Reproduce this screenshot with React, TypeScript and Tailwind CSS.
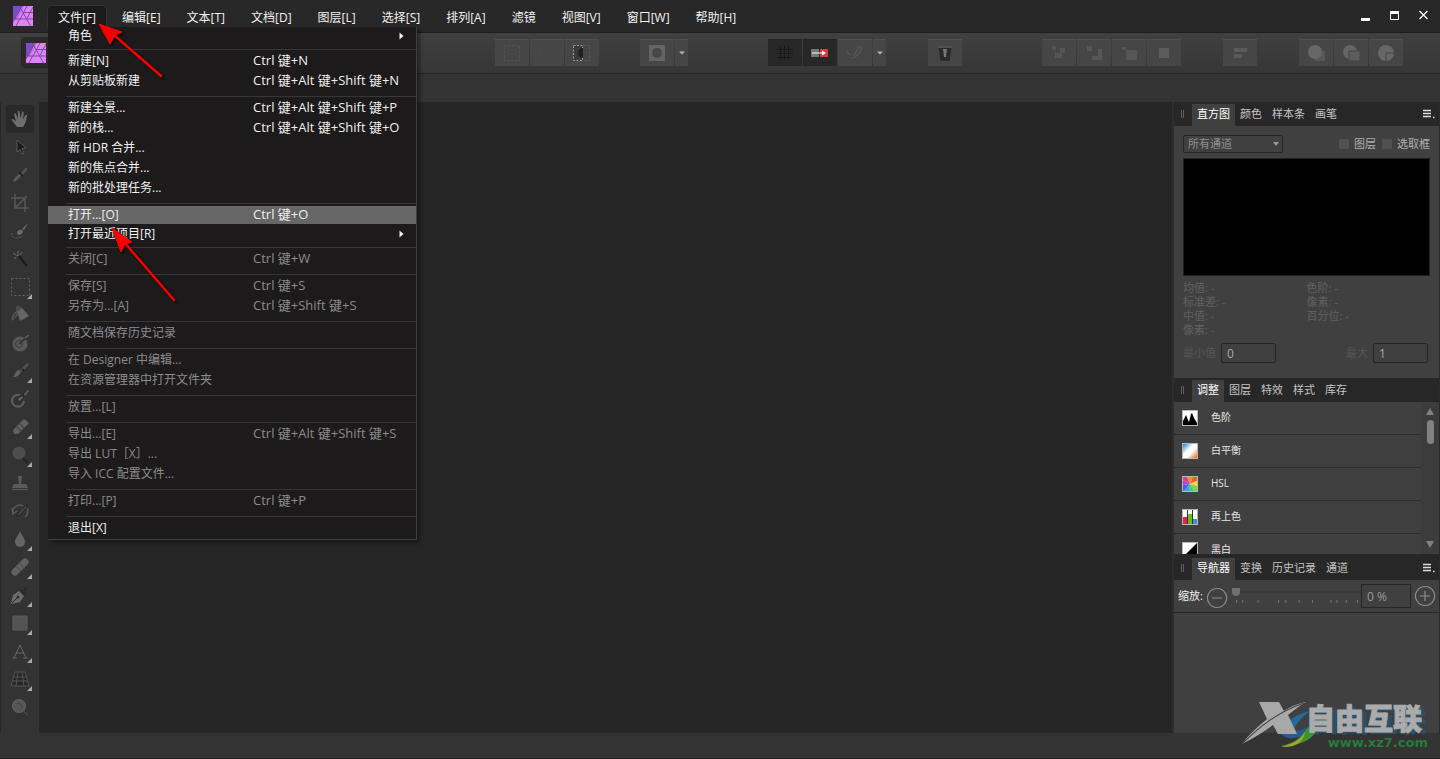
import { ReactNode } from "react";

interface MenuEntry {
  label: string;
  keys?: string;
  disabled?: boolean;
  active?: boolean;
  submenu?: boolean;
}

const menus = ["文件[F]", "编辑[E]", "文本[T]", "文档[D]", "图层[L]", "选择[S]", "排列[A]", "滤镜", "视图[V]", "窗口[W]", "帮助[H]"];

const fileMenu: MenuEntry[][] = [
  [{ label: "角色", submenu: true }],
  [
    { label: "新建[N]", keys: "Ctrl 键+N" },
    { label: "从剪贴板新建", keys: "Ctrl 键+Alt 键+Shift 键+N" },
  ],
  [
    { label: "新建全景...", keys: "Ctrl 键+Alt 键+Shift 键+P" },
    { label: "新的栈...", keys: "Ctrl 键+Alt 键+Shift 键+O" },
    { label: "新 HDR 合并..." },
    { label: "新的焦点合并..." },
    { label: "新的批处理任务..." },
  ],
  [
    { label: "打开...[O]", keys: "Ctrl 键+O", active: true },
    { label: "打开最近项目[R]", submenu: true },
  ],
  [{ label: "关闭[C]", keys: "Ctrl 键+W", disabled: true }],
  [
    { label: "保存[S]", keys: "Ctrl 键+S", disabled: true },
    { label: "另存为...[A]", keys: "Ctrl 键+Shift 键+S", disabled: true },
  ],
  [{ label: "随文档保存历史记录", disabled: true }],
  [
    { label: "在 Designer 中编辑...", disabled: true },
    { label: "在资源管理器中打开文件夹", disabled: true },
  ],
  [{ label: "放置...[L]", disabled: true }],
  [
    { label: "导出...[E]", keys: "Ctrl 键+Alt 键+Shift 键+S", disabled: true },
    { label: "导出 LUT［X］...", disabled: true },
    { label: "导入 ICC 配置文件...", disabled: true },
  ],
  [{ label: "打印...[P]", keys: "Ctrl 键+P", disabled: true }],
  [{ label: "退出[X]" }],
];

const Logo = ({ className = "" }: { className?: string }) => (
  <svg viewBox="0 0 20 20" className={`h-5 w-5 ${className}`} aria-hidden="true">
    <rect width="20" height="20" fill="#e083f8" />
    <path d="M0 0h9L0 16z" fill="#7a4fc4" />
    <path d="M9 0h2L4 13H0v3z" fill="#b46be6" />
    <path d="M9 0L0 16M14 0l-7 13M8 3l9.500 17M0 13h20M20 1l-6 11.500M6.500 13L3 20M10.500 6.500H20" fill="none" stroke="#6a3a8c" strokeWidth="0.800" />
  </svg>
);

const SubmenuArrow = () => (
  <svg viewBox="0 0 5 8" className="absolute right-3 h-2 w-[5px]" aria-hidden="true">
    <path d="M0.500 0.500L4.500 4l-4 3.500z" fill="#f0f0f0" />
  </svg>
);

const FileMenu = () => (
  <div
    role="menu"
    className="absolute top-[27px] left-12 z-20 w-[369px] border-r border-b border-[#3f3f3f] bg-[#1c1a1b] pb-px shadow-[3px_3px_4px_rgba(0,0,0,0.4)]"
  >
    {fileMenu.map((group, i) => (
      <div key={i} className="flex flex-col">
        {i > 0 && <div className="mt-[5px] mb-px ml-[18px] h-px bg-[#383737]" />}
        {group.map((item) => (
          <button
            key={item.label}
            role="menuitem"
            disabled={item.disabled}
            className={`relative flex w-full items-center pl-5 text-left text-xs whitespace-pre ${
              item.submenu ? "h-[17px]" : "my-px h-[18px]"
            } ${item.active ? "bg-[#666]" : ""} ${item.disabled ? "text-[#8c8c8c]" : "text-[#f0f0f0]"}`}
          >
            <span className="w-[185px]">{item.label}</span>
            <span className="text-[13px]">{item.keys}</span>
            {item.submenu && <SubmenuArrow />}
          </button>
        ))}
      </div>
    ))}
  </div>
);

const MenuBar = () => (
  <header className="relative flex h-[33px] items-start border-b border-[#1e1e1e] bg-[#282828]">
    <Logo className="mt-1.5 ml-[13px]" />
    <nav className="mt-[5px] ml-[14px] flex gap-1">
      {menus.map((name, i) => (
        <button
          key={name}
          className={`h-[23px] border px-[10px] pt-[3px] text-xs leading-[18px] text-[#f2f2f2] ${
            i === 0 ? "rounded-t-sm border-[#333] bg-[#1c1a1b]" : "border-transparent"
          }`}
        >
          {name}
        </button>
      ))}
    </nav>
    <div className="mt-[9px] mr-[10px] ml-auto flex gap-[17px]">
      <button aria-label="最小化" className="flex h-3 w-3 items-end">
        <span className="ml-px h-[3px] w-[9px] bg-white" />
      </button>
      <button aria-label="最大化" className="h-3 w-3">
        <svg viewBox="0 0 12 12" className="h-3 w-3">
          <path d="M1.500 2.500h8v8h-8z" fill="none" stroke="#fff" />
          <path d="M1 2h9v3H1z" fill="#fff" />
        </svg>
      </button>
      <button aria-label="关闭" className="h-3 w-3">
        <svg viewBox="0 0 12 12" className="h-3 w-3">
          <path d="M1.500 2l8 8M9.500 2l-8 8" fill="none" stroke="#fff" strokeWidth="1.200" />
        </svg>
      </button>
    </div>
    <FileMenu />
  </header>
);

interface BarButton {
  name: string;
  icon: ReactNode;
  dark?: boolean;
  narrow?: boolean;
}

const caret = <path d="M7 8.500h6l-3 3z" fill="#b4b4b4" />;

const barGroups: { gap: string; buttons: BarButton[] }[] = [
  {
    gap: "ml-auto",
    buttons: [
      { name: "全选", icon: <path d="M2.500 2.500h15v15h-15z" fill="none" stroke="#565656" strokeDasharray="2 2" /> },
      { name: "取消选择", icon: <path d="M2.500 2.500h15v15h-15z" fill="none" stroke="#4b4b4b" strokeDasharray="2 2" /> },
      {
        name: "反选",
        icon: (
          <>
            <path d="M1.500 2.500h9v15h-9z" fill="#3a3a3a" stroke="#a0a0a0" strokeDasharray="2 1.500" />
            <path d="M11 5v10a5 5 0 0 1 0-10z" fill="#1f1f1f" />
            <path d="M11.500 2.500h6v15h-6" fill="none" stroke="#5c5c5c" strokeDasharray="2 2" />
          </>
        ),
      },
    ],
  },
  {
    gap: "ml-[41px]",
    buttons: [
      {
        name: "快速蒙版",
        icon: (
          <>
            <path d="M2 2h16v16H2z" fill="#646464" />
            <circle cx="10" cy="10" r="5" fill="#484848" />
          </>
        ),
      },
      { name: "蒙版选项", icon: caret, narrow: true },
    ],
  },
  {
    gap: "ml-[80px]",
    buttons: [
      { name: "网格", icon: <path d="M2 6.500h16M2 10.500h16M2 14.500h16M5.500 3v14M9.500 3v14M13.500 3v14" stroke="#191919" fill="none" />, dark: true },
      {
        name: "像素对齐",
        icon: (
          <>
            <path d="M1 6h8v8H1z" fill="#777" />
            <path d="M10 6h8v8h-8z" fill="#d83b3f" />
            <path d="M2 10h11" stroke="#fff" />
            <path d="M12 7.500l4 2.500-4 2.500z" fill="#fff" />
          </>
        ),
        dark: true,
      },
      { name: "吸附", icon: <path d="M2 9l3 3m2 3c5 0 10-8 9-11-1-2-3 0-4 3l-3 6" fill="none" stroke="#565656" strokeWidth="1.500" /> },
      { name: "吸附选项", icon: caret, narrow: true },
    ],
  },
  {
    gap: "ml-[42px]",
    buttons: [
      {
        name: "删除",
        icon: (
          <>
            <path d="M3.500 5h13l-2 13h-9z" fill="#2a2a2a" />
            <path d="M8 6h4l-1 8H9z" fill="#777" />
            <path d="M3 4h14" stroke="#525252" strokeWidth="2" />
          </>
        ),
      },
    ],
  },
  {
    gap: "ml-[80px]",
    buttons: [
      { name: "置于底层", icon: <path d="M3 3h4v4H3zM11 5h5v5h-3v5H6v-5h5z" fill="#565656" /> },
      { name: "后移一层", icon: <path d="M3 3h5v5H3zM14 6h4v11H8v-4h6z" fill="#565656" /> },
      { name: "前移一层", icon: <path d="M3 4h4v3H3zM7 7h11v10H7z" fill="#565656" /> },
      { name: "置于顶层", icon: <path d="M5 5h10v10H5z" fill="#5c5c5c" /> },
    ],
  },
  { gap: "ml-[42px]", buttons: [{ name: "对齐", icon: <path d="M4 5h13v4H4zM4 11h8v4H4z" fill="#5a5a5a" /> }] },
  {
    gap: "ml-[42px]",
    buttons: [
      {
        name: "相加",
        icon: (
          <>
            <path d="M15 8h4v10H9v-4z" fill="#585858" />
            <circle cx="9" cy="9" r="7" fill="#676767" />
          </>
        ),
      },
      {
        name: "相减",
        icon: (
          <>
            <circle cx="9" cy="9" r="7" fill="#666" />
            <path d="M8 8h11v10H8z" fill="#5c5c5c" stroke="#444" />
          </>
        ),
      },
      {
        name: "交集",
        icon: (
          <>
            <circle cx="10" cy="10" r="8" fill="#666" />
            <path d="M10 18v-8h8" fill="none" stroke="#444" />
          </>
        ),
      },
    ],
  },
];

const Toolbar = () => (
  <div className="flex h-[41px] items-start border-b border-[#232323] bg-linear-to-b from-[#404040] to-[#363636] pr-[37px] pl-[21px]">
    <button aria-label="照片角色" className="mt-1 flex h-[31px] w-[34px] items-center rounded-sm border border-[#262626] bg-[#2b2b2b] pl-1">
      <Logo />
    </button>
    {barGroups.map((group, i) => (
      <div key={i} className={`mt-1.5 flex gap-px ${group.gap}`}>
        {group.buttons.map((b) => (
          <button
            key={b.name}
            aria-label={b.name}
            className={`flex h-[27px] items-center justify-center border-t ${b.narrow ? "w-[13px]" : "w-[34px]"} ${
              b.dark ? "border-[#232323] bg-[#272727]" : "border-[#505050] bg-[#464646]"
            }`}
          >
            <svg viewBox="0 0 20 20" className="h-5 w-5 shrink-0">
              {b.icon}
            </svg>
          </button>
        ))}
      </div>
    ))}
  </div>
);

const tools: { name: string; more?: boolean; icon: ReactNode }[] = [
  {
    name: "查看工具",
    icon: (
      <path
        d="M7 18C5 15 3 13 1.500 10.500c.6-1 1.600-.6 2.300.1L6 12.500 4 5c.3-1.200 1.500-1 1.900 0L8 10 7.700 2.500c.4-1.200 1.700-1 1.900 0L10.500 9.500 12 3c.5-1 1.700-.7 1.700.4L13 10.500l2.500-4.500c.8-.8 1.800-.2 1.500.9-.8 4-1.500 8-4 11.100z"
        fill="#767676"
      />
    ),
  },
  { name: "移动工具", icon: <path d="M7 3v12l3-2.500 2 4.500 2-1-2-4.500 4-.5z" fill="#191919" stroke="#6a6a6a" strokeWidth="0.800" /> },
  {
    name: "颜色取样器",
    icon: (
      <>
        <path d="M3 17l1-3 6-6 2 2-6 6z" fill="#606060" />
        <path d="M9 7l4 4" stroke="#1c1c1c" strokeWidth="2" />
        <path d="M11 8l4-5c1-1 3 1 2 2l-4 5z" fill="#555" />
      </>
    ),
  },
  { name: "裁剪工具", icon: <path d="M5 1v14h14M1 5h14v14M5 15L17 3" fill="none" stroke="#5c5c5c" strokeWidth="1.500" /> },
  {
    name: "选区画笔",
    icon: (
      <>
        <path d="M18 2l-6 6 2 1zM7 12c0-3 3-4 5-3l1 1c0 3-3 4-5 4z" fill="#727272" />
        <path d="M2 12c-1 3 1 5 4 5s5-1 7-2" fill="none" stroke="#686868" strokeDasharray="2 1.500" />
      </>
    ),
  },
  {
    name: "魔棒选区",
    icon: (
      <>
        <path d="M9 7l8 10" stroke="#1a1a1a" strokeWidth="2.500" />
        <path d="M8 2v4M6 7l3-1M3 4l3 2M4 10l2-2M12 3l-2 3" stroke="#707070" />
      </>
    ),
  },
  { name: "矩形选框", more: true, icon: <path d="M1.500 1.500h18v17h-18z" fill="none" stroke="#6a6a6a" strokeDasharray="2 2" /> },
  {
    name: "填充工具",
    icon: (
      <>
        <path d="M7 6l5-3 7 8-9 5z" fill="#6c6c6c" />
        <path d="M7 6c-3 2-5 5-5 9 1 1 2-3 5-4zM7 7V2c1-2 3-1 4 2" fill="#454545" stroke="#626262" />
      </>
    ),
  },
  {
    name: "渐变工具",
    icon: (
      <>
        <circle cx="10" cy="11" r="7.500" fill="#5e5e5e" />
        <circle cx="9" cy="11" r="3.500" fill="none" stroke="#3b3b3b" />
        <path d="M9 11l9-8" stroke="#353535" strokeWidth="2" />
        <path d="M15 5l4-3" stroke="#686868" strokeWidth="1.500" />
      </>
    ),
  },
  {
    name: "绘画画笔",
    more: true,
    icon: (
      <>
        <path d="M18 3l-7 7" stroke="#585858" strokeWidth="2.500" />
        <path d="M12 8l2 2" stroke="#202020" strokeWidth="2" />
        <path d="M11 10c-1 4-4 6-8 6 2-2 2-5 5-7z" fill="#686868" />
      </>
    ),
  },
  {
    name: "颜色替换",
    icon: (
      <>
        <path d="M14 12a6 6 0 1 1-4-6" fill="none" stroke="#636363" strokeWidth="2" />
        <path d="M8 11l10-9" stroke="#292929" strokeWidth="3" />
        <path d="M8 10l4-3 1 2-4 3zM14 5l4-4 1 1-4 5z" fill="#6c6c6c" />
      </>
    ),
  },
  {
    name: "擦除画笔",
    more: true,
    icon: (
      <>
        <path d="M3 13L14 2l5 4L8 17H4z" fill="#676767" />
        <path d="M10 7l4 4M7 10l4 4" stroke="#464646" strokeWidth="1.500" />
      </>
    ),
  },
  {
    name: "减淡画笔",
    more: true,
    icon: (
      <>
        <circle cx="9" cy="8" r="6.500" fill="#505050" />
        <path d="M13 13l5 5" stroke="#222" strokeWidth="2" />
      </>
    ),
  },
  { name: "仿制画笔", icon: <path d="M8 3h4l-1 8h5l2 4H2l2-4h5zM2 16h16v1H2z" fill="#606060" /> },
  {
    name: "撤销画笔",
    icon: (
      <>
        <path d="M3 13a7 7 0 0 1 10-8M17 7a7 7 0 0 1-2 9M2 7l1 6 4-3" fill="none" stroke="#5f5f5f" strokeWidth="1.500" />
        <path d="M17 3L9 11l-3 4 4-1 7-8z" fill="#4b4b4b" stroke="#242424" />
      </>
    ),
  },
  { name: "模糊画笔", more: true, icon: <path d="M10 2c1 4 5 7 5 11a5 5 0 0 1-10 0c0-4 4-7 5-11z" fill="#6b6b6b" /> },
  {
    name: "修复画笔",
    more: true,
    icon: (
      <>
        <path d="M5 15l10-10" stroke="#676767" strokeWidth="7" strokeLinecap="round" />
        <path d="M7 10l4 4M10 7l4 4" stroke="#4b4b4b" />
      </>
    ),
  },
  {
    name: "钢笔工具",
    more: true,
    icon: (
      <>
        <path d="M1 19l2-9 6-4 5 5-4 6z" fill="#727272" />
        <circle cx="8" cy="12" r="1.500" fill="#2a2a2a" />
        <path d="M2 18l5-5" stroke="#2a2a2a" />
        <path d="M10 5l5 5M13 6l4-4" stroke="#292929" strokeWidth="2" />
      </>
    ),
  },
  { name: "矩形工具", more: true, icon: <path d="M3 3h14v14H3z" fill="#585858" stroke="#626262" /> },
  { name: "美术字", more: true, icon: <path d="M4 17L10 4l6 13M6 12h8M2 17h5M13 17h5" fill="none" stroke="#6c6c6c" /> },
  {
    name: "网格变形",
    more: true,
    icon: (
      <>
        <path d="M5 3h10l4 14H1z" fill="#262626" />
        <path d="M5 3h10l4 14H1zM4 8h12M2 12h16M8 3L6 17M12 3l2 14" fill="none" stroke="#595959" />
      </>
    ),
  },
  {
    name: "缩放工具",
    icon: (
      <>
        <circle cx="9" cy="9" r="6.500" fill="#5c5c5c" stroke="#686868" />
        <path d="M6 7c3-2 6 0 6 4M13.500 14l4 4" fill="none" stroke="#4a4a4a" strokeWidth="1.500" />
      </>
    ),
  },
];

const ToolPalette = () => (
  <aside className="flex w-[39px] flex-col border-l border-[#282828] bg-[#333] pt-[3px] pl-[5px]">
    {tools.map((tool, i) => (
      <button
        key={tool.name}
        aria-label={tool.name}
        className={`relative flex h-7 w-7 items-center justify-center rounded-xs ${i === 0 ? "bg-[#292929]" : ""}`}
      >
        <svg viewBox="0 0 20 20" className="h-5 w-5 opacity-90">
          {tool.icon}
        </svg>
        {tool.more && (
          <svg viewBox="0 0 5 5" className="absolute right-0.5 bottom-0.5 h-[5px] w-[5px]">
            <path d="M5 0v5H0z" fill="#a8a8a8" />
          </svg>
        )}
      </button>
    ))}
  </aside>
);

const PanelTabs = ({ tabs, menu }: { tabs: string[]; menu?: boolean }) => (
  <div className="flex h-6 items-end bg-[#272727]">
    <span className="mr-2 mb-2 ml-[7px] h-2 w-[3px] border-x border-[#5c5c5c]" />
    {tabs.map((tab, i) => (
      <button
        key={tab}
        className={`h-[22px] px-[5px] pb-0.5 text-[11px] ${i === 0 ? "bg-[#404040] text-white" : "text-[#c4c4c4]"}`}
      >
        {tab}
      </button>
    ))}
    {menu && (
      <button aria-label="面板菜单" className="mr-1 mb-[7px] ml-auto">
        <svg viewBox="0 0 13 10" className="h-[10px] w-[13px]">
          <path d="M1 1.500h8M1 4.500h8M1 7.500h8M11 8.500h1.500" stroke="#dcdcdc" strokeWidth="1.500" />
        </svg>
      </button>
    )}
  </div>
);

const Histogram = () => (
  <section>
    <PanelTabs tabs={["直方图", "颜色", "样本条", "画笔"]} menu />
    <div className="h-[252px] pt-[9px] pr-[9px] pl-[9px] text-[11px]">
      <div className="flex items-center text-[#b0b0b0]">
        <div className="relative">
          <select aria-label="通道" className="h-[18px] w-[100px] appearance-none rounded-xs border border-[#242424] bg-[#404040] pl-1 text-[11px] leading-4 text-[#8f8f8f]">
            <option>所有通道</option>
          </select>
          <svg viewBox="0 0 6 4" className="pointer-events-none absolute top-[7px] right-1 h-1 w-1.5">
            <path d="M0 0h6L3 4z" fill="#9a9a9a" />
          </svg>
        </div>
        <label className="ml-auto flex items-center gap-[5px]">
          <input type="checkbox" className="h-[10px] w-[10px] appearance-none bg-[#505050]" />
          图层
        </label>
        <label className="ml-1.5 flex items-center gap-[5px]">
          <input type="checkbox" className="h-[10px] w-[10px] appearance-none bg-[#505050]" />
          选取框
        </label>
      </div>
      <div className="mt-[5px] h-[118px] border border-[#222] bg-black" />
      <div className="mt-[5px] grid grid-cols-2 leading-[14px] text-[#616161]">
        <div>
          <p>均值: -</p>
          <p>标准差: -</p>
          <p>中值: -</p>
          <p>像素: -</p>
        </div>
        <div>
          <p>色阶: -</p>
          <p>像素: -</p>
          <p>百分位: -</p>
        </div>
      </div>
      <div className="mt-1.5 flex items-center justify-between pr-0.5 text-[#565656]">
        <label className="flex items-center gap-[5px]">
          最小值
          <input defaultValue="0" className="h-5 w-[55px] rounded-xs border border-[#242424] bg-[#404040] pl-[5px] text-xs text-[#a8a8a8]" />
        </label>
        <label className="flex items-center gap-[5px]">
          最大
          <input defaultValue="1" className="h-5 w-[55px] rounded-xs border border-[#242424] bg-[#404040] pl-[5px] text-xs text-[#a8a8a8]" />
        </label>
      </div>
    </div>
  </section>
);

const adjustments: { name: string; icon: ReactNode }[] = [
  { name: "色阶", icon: <path d="M1 15v-4l3-6 2 5 1 2 2-8 1-1 2 5 3 5v2z" fill="#000" /> },
  { name: "白平衡", icon: <rect x="1" y="1" width="14" height="14" fill="url(#balance)" /> },
  {
    name: "HSL",
    icon: (
      <>
        <path d="M8 8L5 1h6z" fill="#f08a28" />
        <path d="M8 8l3-7h4v4z" fill="#e8602a" />
        <path d="M8 8l7-3v5z" fill="#f4d52e" />
        <path d="M8 8l7 2v5h-3z" fill="#7fd63c" />
        <path d="M8 8l4 7H7z" fill="#36c98c" />
        <path d="M8 8l-1 7H2z" fill="#36a4e8" />
        <path d="M8 8l-6 7H1V9z" fill="#4c62dc" />
        <path d="M8 8L1 9V4z" fill="#a444d8" />
        <path d="M8 8L1 4V1h4z" fill="#e03c8c" />
      </>
    ),
  },
  {
    name: "再上色",
    icon: (
      <>
        <path d="M5.500 1v14M10.500 1v14" stroke="#333" />
        <path d="M1 8h4v7H1z" fill="#e01f5c" />
        <path d="M6 5h4v10H6z" fill="#66c010" />
        <path d="M11 10h4v5h-4z" fill="#3d90dc" />
      </>
    ),
  },
  { name: "黑白", icon: <path d="M15 1v14H1z" fill="#000" /> },
];

const Adjustments = () => (
  <section>
    <PanelTabs tabs={["调整", "图层", "特效", "样式", "库存"]} />
    <div className="flex h-[152px]">
      <ul className="flex-1 overflow-hidden">
        {adjustments.map((a) => (
          <li key={a.name} className="flex h-[33px] items-center border-b border-[#2c2c2c] pl-2 text-[10px] text-[#e6e6e6]">
            <svg viewBox="0 0 16 16" className="mr-[13px] h-4 w-4">
              <defs>
                <linearGradient id="balance" x2="1" y2="1">
                  <stop offset="0.050" stopColor="#2f8fd8" />
                  <stop offset="0.400" stopColor="#fff" />
                  <stop offset="0.600" stopColor="#fff" />
                  <stop offset="0.950" stopColor="#f07828" />
                </linearGradient>
              </defs>
              <path d="M0 0h16v16H0z" fill="#b8b8b8" />
              <path d="M1 1h14v14H1z" fill="#fff" />
              {a.icon}
            </svg>
            <span className="pb-0.5">{a.name}</span>
          </li>
        ))}
      </ul>
      <div className="flex w-[18px] flex-col items-center bg-[#3c3c3c] py-1.5">
        <svg viewBox="0 0 8 7" className="h-[7px] w-2">
          <path d="M4 0l4 7H0z" fill="#808080" />
        </svg>
        <span className="mt-[5px] h-6 w-[7px] rounded-full bg-[#828282]" />
        <svg viewBox="0 0 8 7" className="mt-auto h-[7px] w-2">
          <path d="M0 0h8L4 7z" fill="#808080" />
        </svg>
      </div>
    </div>
  </section>
);

const ticks = [4, 10, 25, 45, 52, 65, 78, 96, 102, 111, 122];

const Navigator = () => (
  <section className="flex flex-1 flex-col">
    <div className="h-0.5 bg-[#272727]" />
    <PanelTabs tabs={["导航器", "变换", "历史记录", "通道"]} menu />
    <div className="flex h-[33px] items-center border-b border-[#272727] pr-[3px] pl-1">
      <label htmlFor="zoom" className="mr-[3px] text-[11px] whitespace-nowrap text-[#f0f0f0]">
        缩放:
      </label>
      <button aria-label="缩小" className="mt-1">
        <svg viewBox="0 0 22 22" className="h-[22px] w-[22px]">
          <path d="M11 1.500a9.500 9.500 0 1 0 .1 0zM6 11h10" fill="none" stroke="#8c8c8c" strokeWidth="1.200" />
        </svg>
      </button>
      <div className="ml-1 flex-1">
        <input
          id="zoom"
          type="range"
          defaultValue="0"
          className="block h-2 w-full appearance-none bg-linear-to-b from-[#404040] from-30% via-[#353535] to-[#404040] to-70% [&::-webkit-slider-thumb]:h-2 [&::-webkit-slider-thumb]:w-2 [&::-webkit-slider-thumb]:appearance-none [&::-webkit-slider-thumb]:rounded-b-sm [&::-webkit-slider-thumb]:bg-[#707070]"
        />
        <svg viewBox="0 0 126 8" preserveAspectRatio="none" className="h-2 w-full">
          {ticks.map((x) => (
            <path key={x} d={`M${x + 0.5} 4v3`} stroke="#747474" />
          ))}
        </svg>
      </div>
      <input aria-label="缩放比例" defaultValue="0 %" className="h-6 w-[50px] border border-[#272727] bg-[#404040] pl-[5px] text-xs text-[#9c9c9c]" />
      <button aria-label="放大" className="ml-[3px]">
        <svg viewBox="0 0 22 22" className="h-[22px] w-[22px]">
          <path d="M11 1.500a9.500 9.500 0 1 0 .1 0zM6 11h10M11 6v10" fill="none" stroke="#8c8c8c" strokeWidth="1.200" />
        </svg>
      </button>
    </div>
  </section>
);

const Watermark = () => (
  <div className="pointer-events-none absolute right-3 bottom-[7px] z-10 flex flex-col items-end">
    <svg viewBox="0 0 190 50" className="absolute right-0 bottom-0 h-[50px] w-[190px]">
      <path d="M72 9C58 12 46 20 46 29c3 5 12 5 18 2-7 0-9-5-5-9 3-5 8-9 13-13z" fill="#246b9c" />
      <path d="M43 32c5 6 17 6 25-1 5-4 8-8 9-12-7 7-17 12-34 13z" fill="#285991" />
      <path d="M80 23c0 11-16 22-37 21 14-3 20-9 24-15 4-5 8-6 13-6z" fill="#3f8f2f" />
      <path d="M43 45c12-3 19-7 24-15-1 9-9 16-24 15z" fill="#a5a824" />
      <path d="M21 0h20l5 9c6-4 12-7 22-9-7 4-12 8-18 13l9 19H40l-5-9C24 31 14 37 4 42c7-10 17-18 25-25z" fill="#a8a8a8" />
      <path d="M4 42C22 24 40 10 66 1" fill="none" stroke="#444" strokeWidth="1.200" />
    </svg>
    <span className="relative mr-1.5 text-[29px] leading-[30px] font-black text-[#ababab] [-webkit-text-stroke:1px_#ababab] [text-shadow:5px_2px_0_#2b5069]">
      自由互联
    </span>
    <span className="relative font-['DejaVu_Sans'] text-[13px] leading-[18px] font-bold text-[#267a3c]">www.xz7.com</span>
  </div>
);

const PointerArrows = () => (
  <svg viewBox="0 0 140 290" className="pointer-events-none absolute top-5 left-[90px] z-30 h-[290px] w-[140px]" aria-hidden="true">
    <g fill="#f80000" stroke="#f80000" className="drop-shadow-[2px_2px_1px_rgba(0,0,0,0.6)]">
      <path d="M24 15L71 56" strokeWidth="2.500" strokeLinecap="round" />
      <path d="M9 4l23 8-7 3-5 9z" strokeWidth="1" />
      <path d="M34 222l50 58" strokeWidth="2.500" strokeLinecap="round" />
      <path d="M22 208l20 14-7 2-4 8z" strokeWidth="1" />
    </g>
  </svg>
);

const App = () => (
  <div className="relative flex min-h-screen flex-col bg-[#333] font-['Open_Sans','Noto_Sans_CJK_SC',sans-serif]">
    <MenuBar />
    <Toolbar />
    <div className="h-7" />
    <main className="flex flex-1">
      <ToolPalette />
      <div className="flex-1 bg-[#262626]" />
      <aside className="flex w-[268px] flex-col border-r border-l-2 border-r-[#2a2a2a] border-l-[#2e2e2e] bg-[#404040]">
        <Histogram />
        <Adjustments />
        <Navigator />
      </aside>
    </main>
    <footer className="h-[26px] border-b border-[#222] bg-[#333]" />
    <Watermark />
    <PointerArrows />
  </div>
);

export default App;
